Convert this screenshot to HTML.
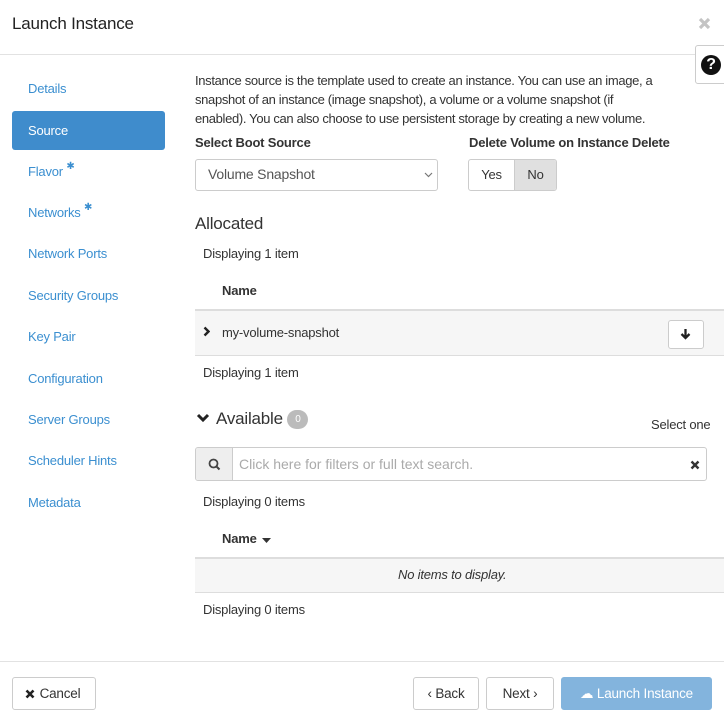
<!DOCTYPE html>
<html><head><meta charset="utf-8"><style>
*{box-sizing:border-box;margin:0;padding:0}
body{width:724px;height:719px;background:#fff;font-family:"Liberation Sans",sans-serif;font-size:13px;color:#333;position:relative;overflow:hidden;letter-spacing:-0.2px}
.a{position:absolute;white-space:nowrap}
.nav{position:absolute;left:12px;width:153px;height:39px;line-height:39px;padding-left:16px;color:#3b8fd0;font-size:13px;border-radius:3px}
.nav.on{background:#3f8ccc;color:#fff}
.btn{position:absolute;border:1px solid #ccc;border-radius:3px;background:#fff;text-align:center;font-size:13.5px;color:#333}
svg{display:inline-block}
</style></head><body>
<div class="a" style="left:12px;top:14px;font-size:17px;color:#222">Launch Instance</div>
<svg class="a" style="left:698px;top:17px" width="13" height="13" viewBox="0 0 13 13"><path d="M2 2L11 11M11 2L2 11" stroke="#c4c4c4" stroke-width="3.2"/></svg>
<div style="position:absolute;left:0;top:54px;width:724px;height:1px;background:#e2e2e2"></div>
<div style="position:absolute;left:695px;top:45px;width:32px;height:39px;border:1px solid #ccc;border-radius:3px 0 0 3px;background:#fff"></div>
<div class="a" style="left:701px;top:55px;width:20px;height:20px;border-radius:50%;background:#111;color:#fff;font-weight:bold;font-size:16px;text-align:center;line-height:20px">?</div>

<div class="nav" style="top:69px">Details</div>
<div class="nav on" style="top:111px">Source</div>
<div class="nav" style="top:152px">Flavor <span style="font-size:10px;vertical-align:top;line-height:30px">✱</span></div>
<div class="nav" style="top:193px">Networks <span style="font-size:10px;vertical-align:top;line-height:30px">✱</span></div>
<div class="nav" style="top:234px">Network Ports</div>
<div class="nav" style="top:276px">Security Groups</div>
<div class="nav" style="top:317px">Key Pair</div>
<div class="nav" style="top:359px">Configuration</div>
<div class="nav" style="top:400px">Server Groups</div>
<div class="nav" style="top:441px">Scheduler Hints</div>
<div class="nav" style="top:483px">Metadata</div>

<div class="a" style="left:195px;top:71px;line-height:19px;letter-spacing:-0.34px">Instance source is the template used to create an instance. You can use an image, a<br>snapshot of an instance (image snapshot), a volume or a volume snapshot (if<br>enabled). You can also choose to use persistent storage by creating a new volume.</div>
<div class="a" style="left:195px;top:135px;font-weight:bold">Select Boot Source</div>
<div class="a" style="left:469px;top:135px;font-weight:bold">Delete Volume on Instance Delete</div>
<div style="position:absolute;left:195px;top:159px;width:243px;height:32px;border:1px solid #ccc;border-radius:3px"></div>
<div class="a" style="left:208px;top:166px;font-size:14px;color:#555">Volume Snapshot</div>
<svg class="a" style="left:424px;top:172px" width="9" height="6" viewBox="0 0 9 6"><path d="M1 1L4.5 4.5L8 1" stroke="#777" fill="none" stroke-width="1.2"/></svg>
<div style="position:absolute;left:468px;top:159px;width:89px;height:32px;border:1px solid #ccc;border-radius:3px;overflow:hidden;display:flex">
<div style="width:46px;line-height:30px;text-align:center;border-right:1px solid #ccc">Yes</div>
<div style="flex:1;line-height:30px;text-align:center;background:#e0e0e0">No</div></div>

<div class="a" style="left:195px;top:214px;font-size:17px">Allocated</div>
<div class="a" style="left:203px;top:246px">Displaying 1 item</div>
<div class="a" style="left:222px;top:283px;font-weight:bold">Name</div>
<div style="position:absolute;left:195px;top:309px;width:529px;height:47px;background:#f6f6f6;border-top:2px solid #ddd;border-bottom:1px solid #ddd"></div>
<svg class="a" style="left:203px;top:326px" width="7" height="11" viewBox="0 0 7 11"><path d="M1.5 1.5L5.5 5.5L1.5 9.5" stroke="#222" fill="none" stroke-width="2.4"/></svg>
<div class="a" style="left:222px;top:325px">my-volume-snapshot</div>
<div class="btn" style="left:668px;top:320px;width:36px;height:29px"></div>
<svg class="a" style="left:680px;top:328px" width="11" height="12" viewBox="0 0 11 12"><path d="M5.5 1V10M1.5 6L5.5 10L9.5 6" stroke="#222" fill="none" stroke-width="2.3"/></svg>
<div class="a" style="left:203px;top:365px">Displaying 1 item</div>

<svg class="a" style="left:196px;top:413px" width="14" height="10" viewBox="0 0 14 10"><path d="M2 2L7 7L12 2" stroke="#222" fill="none" stroke-width="3"/></svg>
<div class="a" style="left:216px;top:409px;font-size:17px">Available <span style="display:inline-block;background:#bbb;color:#fff;border-radius:10px;font-size:10px;width:21px;height:19px;line-height:19px;text-align:center;vertical-align:2px">0</span></div>
<div class="a" style="left:651px;top:417px">Select one</div>
<div style="position:absolute;left:195px;top:447px;width:512px;height:34px;border:1px solid #ccc;border-radius:3px;overflow:hidden">
<div style="position:absolute;left:0;top:0;width:37px;height:32px;background:#eee;border-right:1px solid #ccc"></div>
<svg class="a" style="left:12px;top:10px" width="13" height="13" viewBox="0 0 13 13"><circle cx="5.5" cy="5.5" r="4" stroke="#444" fill="none" stroke-width="1.8"/><path d="M8.5 8.5L11.5 11.5" stroke="#444" stroke-width="2"/></svg>
<div class="a" style="left:43px;top:8px;font-size:14px;color:#aaa;letter-spacing:0">Click here for filters or full text search.</div>
<svg class="a" style="left:494px;top:12px" width="10" height="10" viewBox="0 0 10 10"><path d="M1.5 1.5L8.5 8.5M8.5 1.5L1.5 8.5" stroke="#333" stroke-width="2.4"/></svg></div>
<div class="a" style="left:203px;top:494px">Displaying 0 items</div>
<div class="a" style="left:222px;top:531px;font-weight:bold">Name</div>
<svg class="a" style="left:262px;top:538px" width="9" height="5" viewBox="0 0 9 5"><path d="M0 0H9L4.5 5Z" fill="#333"/></svg>
<div style="position:absolute;left:195px;top:557px;width:529px;height:36px;background:#f6f6f6;border-top:2px solid #ddd;border-bottom:1px solid #ddd"></div>
<div class="a" style="left:398px;top:567px;font-style:italic">No items to display.</div>
<div class="a" style="left:203px;top:602px">Displaying 0 items</div>

<div style="position:absolute;left:0;top:661px;width:724px;height:1px;background:#e2e2e2"></div>
<div class="btn" style="left:12px;top:677px;width:84px;height:33px;line-height:31px;padding-left:12px"><svg class="a" style="left:12px;top:11px" width="10" height="10" viewBox="0 0 10 10"><path d="M1.5 1.5L8.5 8.5M8.5 1.5L1.5 8.5" stroke="#222" stroke-width="2.6"/></svg>Cancel</div>
<div class="btn" style="left:413px;top:677px;width:66px;height:33px;line-height:31px">‹ Back</div>
<div class="btn" style="left:486px;top:677px;width:68px;height:33px;line-height:31px">Next ›</div>
<div class="btn" style="left:561px;top:677px;width:151px;height:33px;line-height:31px;background:#83b4dd;border-color:#83b4dd;color:#fff">☁ Launch Instance</div>
</body></html>
